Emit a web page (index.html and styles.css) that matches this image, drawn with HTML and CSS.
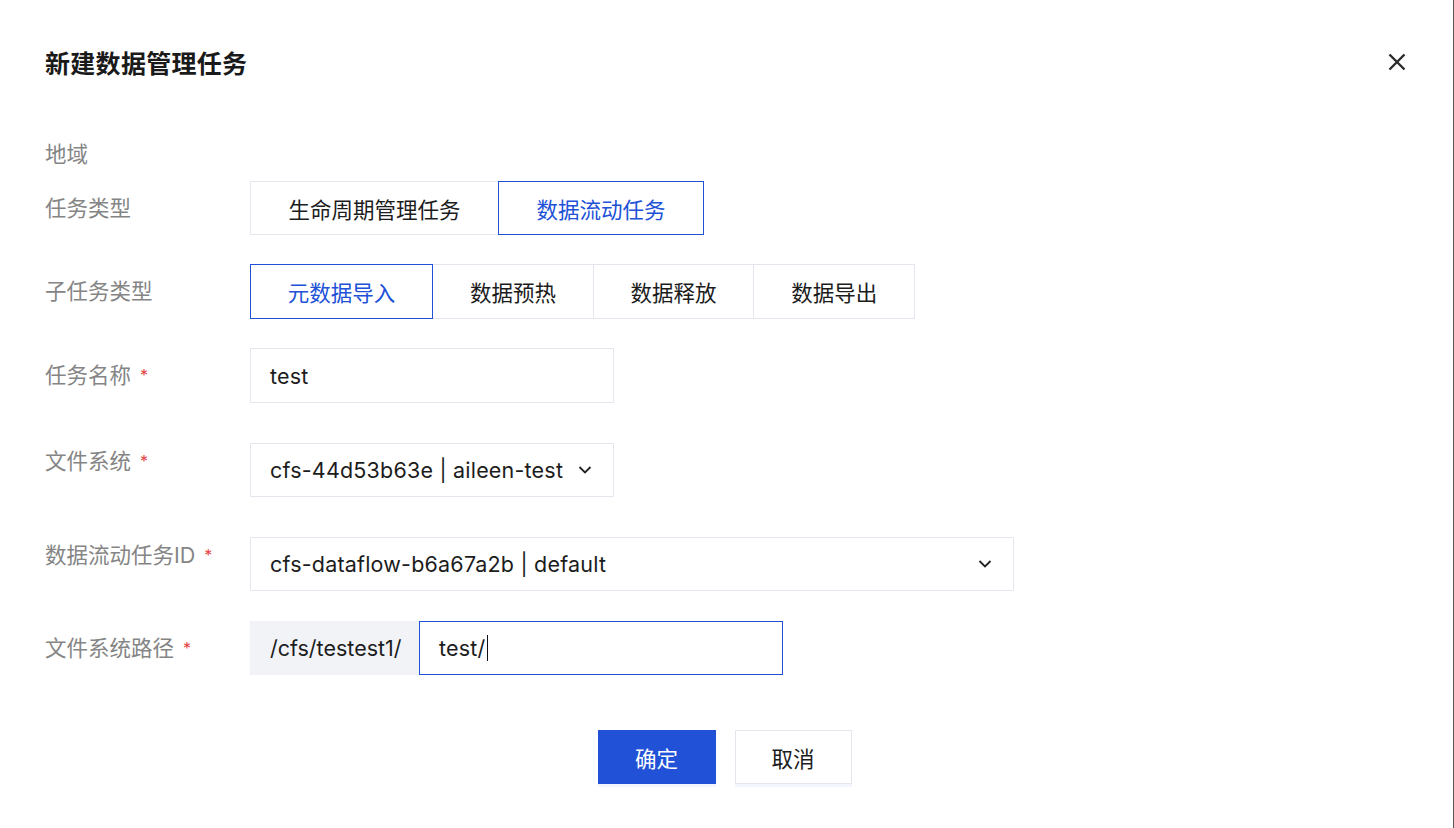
FILE: index.html
```html
<!DOCTYPE html>
<html lang="zh-CN">
<head>
    <meta charset="UTF-8">
    <meta name="viewport" content="width=device-width, initial-scale=1.0">
    <title>新建数据管理任务</title>
    <link rel="stylesheet" href="styles.css">
</head>
<body>
<div class="dialog">
    <div class="dialog-header">
        <h3 class="dialog-title">新建数据管理任务</h3>
        <span class="close-btn">
            <svg width="20" height="20" viewBox="0 0 20 20"><path d="M2.5 2.5 L17.5 17.5 M17.5 2.5 L2.5 17.5" stroke="#2b2b2b" stroke-width="2.4" fill="none"/></svg>
        </span>
    </div>

    <div class="form">
        <div class="form-row row-region">
            <label class="form-label">地域</label>
            <div class="form-ctrl"></div>
        </div>

        <div class="form-row row-type">
            <label class="form-label">任务类型</label>
            <div class="form-ctrl">
                <div class="segment">
                    <button class="seg-btn">生命周期管理任务</button>
                    <button class="seg-btn active">数据流动任务</button>
                </div>
            </div>
        </div>

        <div class="form-row row-sub">
            <label class="form-label">子任务类型</label>
            <div class="form-ctrl">
                <div class="segment">
                    <button class="seg-btn active">元数据导入</button>
                    <button class="seg-btn">数据预热</button>
                    <button class="seg-btn">数据释放</button>
                    <button class="seg-btn">数据导出</button>
                </div>
            </div>
        </div>

        <div class="form-row row-name">
            <label class="form-label">任务名称<i class="req">*</i></label>
            <div class="form-ctrl">
                <div class="input">test</div>
            </div>
        </div>

        <div class="form-row row-fs">
            <label class="form-label label-top">文件系统<i class="req">*</i></label>
            <div class="form-ctrl">
                <div class="select">
                    <span>cfs-44d53b63e | aileen-test</span>
                    <svg class="arrow" width="16" height="16" viewBox="0 0 16 16"><path d="M2.5 5 L8 10.5 L13.5 5" stroke="#222" stroke-width="1.8" fill="none"/></svg>
                </div>
            </div>
        </div>

        <div class="form-row row-flow">
            <label class="form-label label-top">数据流动任务ID<i class="req">*</i></label>
            <div class="form-ctrl">
                <div class="select select-wide">
                    <span>cfs-dataflow-b6a67a2b | default</span>
                    <svg class="arrow" width="16" height="16" viewBox="0 0 16 16"><path d="M2.5 5 L8 10.5 L13.5 5" stroke="#222" stroke-width="1.8" fill="none"/></svg>
                </div>
            </div>
        </div>

        <div class="form-row row-path">
            <label class="form-label">文件系统路径<i class="req">*</i></label>
            <div class="form-ctrl">
                <div class="input-group">
                    <span class="addon">/cfs/testest1/</span>
                    <div class="input focused">test/<span class="caret"></span></div>
                </div>
            </div>
        </div>
    </div>

    <div class="dialog-footer">
        <button class="btn btn-primary">确定</button>
        <button class="btn">取消</button>
    </div>
</div>
</body>
</html>
```

FILE: styles.css
```css
:root {
    --blue: #2151d7;
    --border: #e3e6ec;
    --label: #858585;
    --text: #1c1c1c;
}

* {
    box-sizing: border-box;
}

body {
    margin: 0;
    background: #fff;
    font-family: Inter, "Noto Sans CJK SC", sans-serif;
    color: var(--text);
}

.dialog {
    height: 828px;
    padding: 38px 0 0 45px;
    border-right: 1px solid #555;
}

.dialog-header {
    display: flex;
    justify-content: space-between;
    align-items: center;
    height: 48px;
    padding-right: 46px;
}

.dialog-title {
    margin: 0;
    font-size: 25px;
    font-weight: bold;
    letter-spacing: 0.3px;
    color: #1a1a1a;
}

.close-btn {
    display: flex;
    width: 20px;
    height: 20px;
}

.form {
    margin-top: 53px;
}

.form-row {
    display: grid;
    grid-template-columns: 205px 1fr;
    align-items: start;
}

.form-label {
    height: 54px;
    font-size: 21.5px;
    color: var(--label);
    line-height: 54px;
    white-space: nowrap;
}

.form-label.label-top {
    line-height: 36px;
}

.req {
    font-style: normal;
    color: #e54545;
    font-size: 16px;
    line-height: 1;
    margin-left: 9px;
    vertical-align: 2px;
}

.row-region .form-label {
    height: 30px;
    line-height: 30px;
}

.row-region { margin-bottom: 12px; }
.row-type { margin-bottom: 29px; }
.row-sub { margin-bottom: 29px; }
.row-name { margin-bottom: 40px; }
.row-fs { margin-bottom: 40px; }
.row-flow { margin-bottom: 30px; }

.segment {
    display: flex;
}

.seg-btn {
    height: 54px;
    padding: 0 37.5px;
    margin-left: -1px;
    border: 1px solid var(--border);
    background: #fff;
    font-family: inherit;
    font-size: 21.5px;
    color: var(--text);
    position: relative;
}

.seg-btn:first-child {
    margin-left: 0;
}

.seg-btn.active {
    border-color: var(--blue);
    color: var(--blue);
    z-index: 1;
}

.row-sub .seg-btn {
    height: 55px;
    padding: 0 36.8px;
}

.input,
.select {
    width: 364px;
    height: 54px;
    border: 1px solid var(--border);
    padding: 0 19px;
    display: flex;
    align-items: center;
    font-size: 21.5px;
    letter-spacing: 0.2px;
    color: var(--text);
}

.row-name .input {
    height: 55px;
}

.select {
    justify-content: space-between;
    padding-right: 20px;
}

.select-wide {
    width: 764px;
}

.arrow {
    flex-shrink: 0;
}

.input-group {
    display: flex;
}

.addon {
    display: flex;
    align-items: center;
    width: 169px;
    height: 54px;
    padding-left: 20px;
    background: #f2f3f7;
    font-size: 21.5px;
    color: var(--text);
}

.input.focused {
    border-color: var(--blue);
}

.caret {
    display: inline-block;
    width: 1px;
    height: 26px;
    background: #111;
    margin-left: 1px;
}

.dialog-footer {
    display: flex;
    justify-content: center;
    gap: 19px;
    margin-top: 55px;
    padding-right: 49px;
}

.btn {
    height: 54px;
    width: 117px;
    border: 1px solid var(--border);
    background: #fff;
    font-family: inherit;
    font-size: 21.5px;
    color: var(--text);
    box-shadow: 0 3px 0 #f3f6fc;
}

.btn-primary {
    width: 118px;
    background: var(--blue);
    border-color: var(--blue);
    color: #fff;
}
```
